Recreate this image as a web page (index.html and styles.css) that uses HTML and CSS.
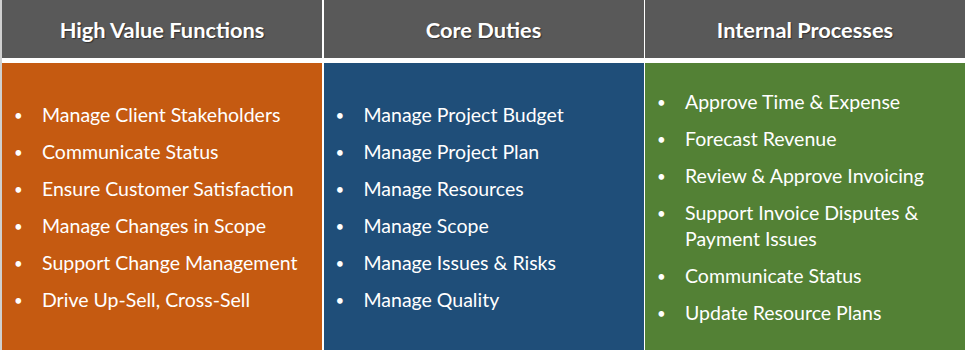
FILE: index.html
```html
<!DOCTYPE html>
<html>
<head>
<meta charset="utf-8">
<link rel="stylesheet" href="styles.css">
</head>
<body>
<div class="board">
  <div class="head">High Value Functions</div>
  <div class="head">Core Duties</div>
  <div class="head">Internal Processes</div>
  <div class="panel orange">
    <ul class="list">
      <li><span class="dot">•</span><span class="txt">Manage Client Stakeholders</span></li>
      <li><span class="dot">•</span><span class="txt">Communicate Status</span></li>
      <li><span class="dot">•</span><span class="txt">Ensure Customer Satisfaction</span></li>
      <li><span class="dot">•</span><span class="txt">Manage Changes in Scope</span></li>
      <li><span class="dot">•</span><span class="txt">Support Change Management</span></li>
      <li><span class="dot">•</span><span class="txt">Drive Up-Sell, Cross-Sell</span></li>
    </ul>
  </div>
  <div class="panel blue">
    <ul class="list">
      <li><span class="dot">•</span><span class="txt">Manage Project Budget</span></li>
      <li><span class="dot">•</span><span class="txt">Manage Project Plan</span></li>
      <li><span class="dot">•</span><span class="txt">Manage Resources</span></li>
      <li><span class="dot">•</span><span class="txt">Manage Scope</span></li>
      <li><span class="dot">•</span><span class="txt">Manage Issues &amp; Risks</span></li>
      <li><span class="dot">•</span><span class="txt">Manage Quality</span></li>
    </ul>
  </div>
  <div class="panel green">
    <ul class="list">
      <li><span class="dot">•</span><span class="txt">Approve Time &amp; Expense</span></li>
      <li><span class="dot">•</span><span class="txt">Forecast Revenue</span></li>
      <li><span class="dot">•</span><span class="txt">Review &amp; Approve Invoicing</span></li>
      <li><span class="dot">•</span><span class="txt">Support Invoice Disputes &amp; Payment Issues</span></li>
      <li><span class="dot">•</span><span class="txt">Communicate Status</span></li>
      <li><span class="dot">•</span><span class="txt">Update Resource Plans</span></li>
    </ul>
  </div>
</div>
</body>
</html>
```
FILE: styles.css
```css
html, body {
  margin: 0;
  padding: 0;
  background: #ffffff;
}
body {
  width: 965px;
  height: 350px;
  overflow: hidden;
  font-family: Lato, "Open Sans", sans-serif;
  color: #ffffff;
}
.board {
  display: grid;
  grid-template-columns: 320px 320px 320px;
  grid-template-rows: 58px 287px;
  column-gap: 1.5px;
  row-gap: 5px;
  padding-left: 2px;
  background: linear-gradient(to right, #d0d0d0 0, #d0d0d0 2px, #ffffff 2px);
}
.head {
  background: #595959;
  display: flex;
  align-items: center;
  justify-content: center;
  font-weight: 700;
  font-size: 21.8px;
  text-shadow: 1px 1px 1px rgba(0,0,0,0.45);
}
.panel {
  display: flex;
  align-items: center;
  padding-top: 2px;
  box-sizing: border-box;
}
.orange { background: #c55a11; }
.blue { background: #1f4e79; }
.green { background: #538135; }
.list {
  list-style: none;
  margin: 0;
  padding: 0 0 0 10px;
  display: flex;
  flex-direction: column;
  row-gap: 11px;
  font-size: 19.5px;
  line-height: 26px;
}
.list li {
  display: flex;
}
.dot {
  width: 30px;
  flex: none;
  font-size: 15px;
  padding-left: 2px;
  box-sizing: border-box;
}
.txt {
  width: 270px;
}
```
